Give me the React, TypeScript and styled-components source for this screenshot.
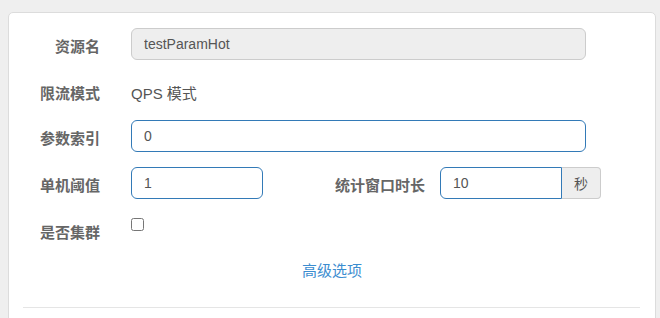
import styled, { createGlobalStyle } from 'styled-components';

const GlobalStyle = createGlobalStyle`
  html, body {
    margin: 0;
    padding: 0;
    background: #efefef;
  }
  body {
    font-family: 'Liberation Sans', 'Noto Sans CJK SC', sans-serif;
    font-size: 14px;
    color: #555;
  }
`;

export default function App() {
  return (
    <>
      <GlobalStyle />
      <Page>
        <Card>
          <Row>
            <Label>资源名</Label>
            <Input $width={455} $readonly value='testParamHot' readOnly />
          </Row>
          <Row $height={30}>
            <Label>限流模式</Label>
            <StaticText>QPS 模式</StaticText>
          </Row>
          <Row>
            <Label>参数索引</Label>
            <Input $width={455} defaultValue='0' />
          </Row>
          <Row>
            <Label>单机阈值</Label>
            <Input $width={132} defaultValue='1' />
            <Label $width={162} $gap={15}>统计窗口时长</Label>
            <InputGroup>
              <GroupInput defaultValue='10' />
              <Addon>秒</Addon>
            </InputGroup>
          </Row>
          <Row>
            <Label>是否集群</Label>
            <Checkbox type='checkbox' />
          </Row>
          <AdvancedLink href='#'>高级选项</AdvancedLink>
          <Divider />
        </Card>
      </Page>
    </>
  );
}

const Page = styled.div`
  padding: 12px 4px 0 8px;
  height: 318px;
  box-sizing: border-box;
  overflow: hidden;
`;

const Card = styled.div`
  background: #fff;
  border: 1px solid #dcdcdc;
  border-radius: 5px;
  padding: 15px 0 40px;
  display: flex;
  flex-direction: column;
`;

const Row = styled.div<{ $height?: number }>`
  display: flex;
  align-items: flex-start;
  min-height: ${(p) => p.$height ?? 32}px;
  margin-bottom: 15px;
`;

const Label = styled.label<{ $width?: number; $gap?: number }>`
  flex: none;
  width: ${(p) => p.$width ?? 91}px;
  margin-right: ${(p) => p.$gap ?? 31}px;
  padding-top: 9px;
  line-height: 20px;
  font-size: 15px;
  text-align: right;
  font-weight: 700;
  color: #666;
`;

const StaticText = styled.div`
  padding-top: 9px;
  line-height: 20px;
  font-size: 15px;
  color: #555;
`;

const Input = styled.input<{ $width: number; $readonly?: boolean }>`
  box-sizing: border-box;
  width: ${(p) => p.$width}px;
  height: 32px;
  padding: 0 12px;
  font: inherit;
  font-size: 14px;
  color: #555;
  background: ${(p) => (p.$readonly ? '#eee' : '#fff')};
  border: 1px solid ${(p) => (p.$readonly ? '#ccc' : '#337ab7')};
  border-radius: 6px;
  outline: none;
`;

const InputGroup = styled.div`
  display: flex;
  height: 32px;
`;

const GroupInput = styled.input`
  box-sizing: border-box;
  width: 122px;
  height: 32px;
  padding: 0 12px;
  font: inherit;
  font-size: 14px;
  color: #555;
  border: 1px solid #337ab7;
  border-radius: 6px 0 0 6px;
  outline: none;
`;

const Addon = styled.span`
  box-sizing: border-box;
  width: 39px;
  height: 32px;
  display: flex;
  align-items: center;
  justify-content: center;
  background: #eee;
  border: 1px solid #ccc;
  border-left: 0;
  border-radius: 0 4px 4px 0;
  color: #555;
`;

const Checkbox = styled.input`
  width: 13px;
  height: 13px;
  margin: 4px 0 0;
`;

const AdvancedLink = styled.a`
  align-self: center;
  line-height: 20px;
  font-size: 15px;
  color: #3c8dd0;
  text-decoration: none;
`;

const Divider = styled.hr`
  margin: 26px 15px 0 14px;
  border: 0;
  border-top: 1px solid #e5e5e5;
`;
